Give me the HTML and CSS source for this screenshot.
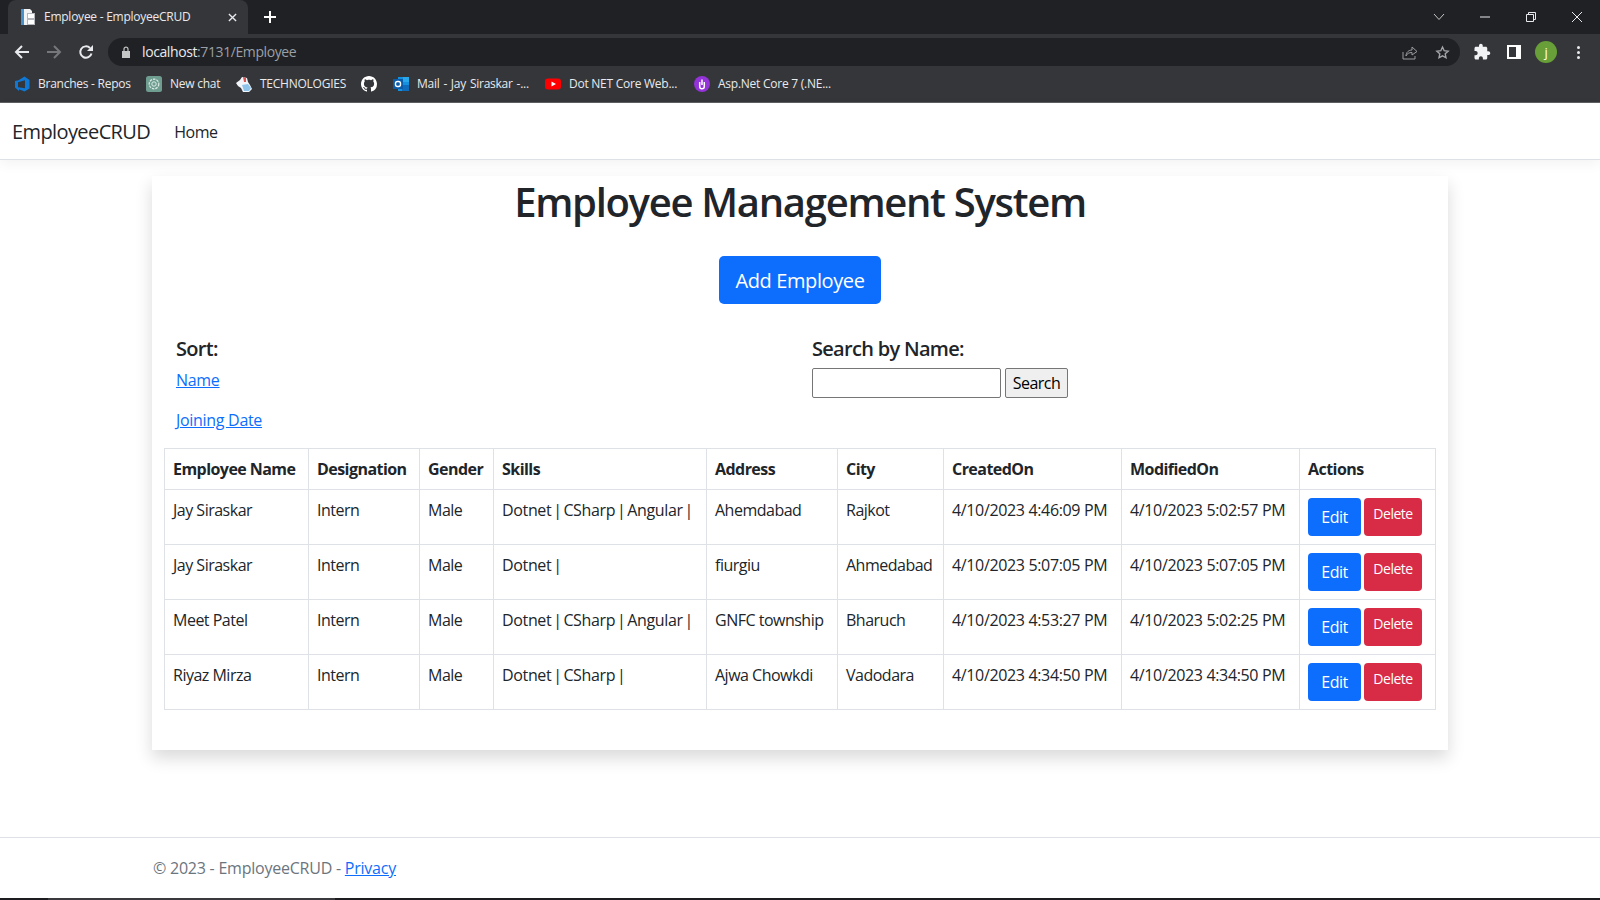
FILE: index.html
```html
<!DOCTYPE html>
<html>
  <head>
    <title>Employee - EmployeeCRUD</title>
    <link rel="stylesheet" href="styles.css">
  </head>
  <body>
    <div class="tabstrip">
      <div class="tab">
        <svg class="fav" viewBox="0 0 16 16"><path fill="#f1f3f4" d="M1 0h9l2 2v14H1z"/><path fill="#4a90c8" d="M1 0h3v16H1z"/><path fill="#b4b8bc" d="M7 4h8v12H7z"/><path fill="#fff" d="M8 5h6v4H8zM8 11h6v4H8z"/></svg>
        <span class="tab-title">Employee - EmployeeCRUD</span>
        <svg class="tab-close" viewBox="0 0 10 10"><path d="M1 1l8 8M9 1l-8 8" stroke="#e8eaed" stroke-width="1.500"/></svg>
      </div>
      <svg class="new-tab" viewBox="0 0 12 12"><path d="M6 0v12M0 6h12" stroke="#fff" stroke-width="2"/></svg>
      <div class="strip-space"></div>
      <div class="chevron"><svg viewBox="0 0 12 8" width="12" height="8"><path d="M1 1l5 5.500L11 1" fill="none" stroke="#c4c7c5" stroke-width="1"/></svg></div>
      <div class="win-btn"><svg viewBox="0 0 10 10" width="10" height="10"><path d="M0 5h10" stroke="#e8eaed" stroke-width="1"/></svg></div>
      <div class="win-btn"><svg viewBox="0 0 10 10" width="10" height="10"><path d="M.5 2.500h7v7h-7zM2.500 2.500v-2h7v7h-2" fill="none" stroke="#e8eaed" stroke-width="1"/></svg></div>
      <div class="win-btn"><svg viewBox="0 0 10 10" width="10" height="10"><path d="M0 0l10 10M10 0L0 10" stroke="#e8eaed" stroke-width="1"/></svg></div>
    </div>

    <div class="toolbar">
      <div class="tool"><svg viewBox="0 0 16 16" width="16" height="16"><path d="M15 8H2M8 2L2 8l6 6" fill="none" stroke="#e8eaed" stroke-width="2"/></svg></div>
      <div class="tool"><svg viewBox="0 0 16 16" width="16" height="16"><path d="M1 8h13M8 2l6 6-6 6" fill="none" stroke="#75777a" stroke-width="2"/></svg></div>
      <div class="tool"><svg viewBox="0 0 16 16" width="16" height="16"><path d="M13.500 9.500A5.700 5.700 0 1 1 12 4" fill="none" stroke="#e8eaed" stroke-width="2"/><path d="M15 1v6H9z" fill="#e8eaed"/></svg></div>
      <div class="omnibox">
        <svg class="lock" viewBox="0 0 10 12" width="10" height="12"><path fill="#c4c7c5" d="M1 5h8v7H1z"/><path d="M3 5V3.200a2 2 0 0 1 4 0V5" fill="none" stroke="#c4c7c5" stroke-width="1.200"/></svg>
        <span class="url"><span class="host">localhost</span>:7131/Employee</span>
        <div class="omni-space"></div>
        <div class="tool"><svg viewBox="0 0 16 16" width="16" height="16"><path d="M1 8v7h12v-3" fill="none" stroke="#9a9c9f" stroke-width="1"/><path d="M4 12c0-4 3-6 6-6V3l5 4.500L10 11V8.500c-3 0-5 1-6 3.500z" fill="none" stroke="#9a9c9f" stroke-width="1"/></svg></div>
        <div class="tool"><svg viewBox="0 0 16 16" width="15" height="15"><path d="M8 2.200l1.800 3.900 4.200.500-3.100 2.800.8 4.200L8 11.500l-3.700 2.100.8-4.200L2 6.600l4.200-.500z" fill="none" stroke="#a4a6a9" stroke-width="1.500"/></svg></div>
      </div>
      <div class="toolbar-right">
        <div class="tool"><svg viewBox="0 0 24 24" width="18" height="18"><path fill="#f1f3f4" d="M20.500 11H19V7c0-1.100-.900-2-2-2h-4V3.500C13 2.120 11.880 1 10.500 1S8 2.120 8 3.500V5H4c-1.100 0-1.990.900-1.990 2v3.800H3.500c1.490 0 2.700 1.210 2.700 2.700s-1.210 2.700-2.700 2.700H2V20c0 1.100.900 2 2 2h3.800v-1.500c0-1.490 1.210-2.700 2.700-2.700 1.490 0 2.700 1.210 2.700 2.700V22H17c1.100 0 2-.900 2-2v-4h1.500c1.380 0 2.500-1.120 2.500-2.500S21.880 11 20.500 11z"/></svg></div>
        <div class="tool"><svg viewBox="0 0 14 14" width="14" height="14"><path fill="#fff" d="M0 0h14v14H0z"/><path fill="#35363a" d="M2 2h7v10H2z"/></svg></div>
        <div class="tool"><span class="avatar">j</span></div>
        <div class="tool"><span class="dots"><i></i><i></i><i></i></span></div>
      </div>
    </div>

    <div class="bookmarks">
      <a class="bm bm-repos"><svg viewBox="0 0 16 16" width="16" height="16"><path fill="#0f78d4" fill-rule="evenodd" d="M10.500 .5l5 3.500v8.500l-5 3-5.500-2.300V15L1 11.500V5l3.500-.700zM4 6.200v5l7 1V4.200z"/></svg>Branches - Repos</a>
      <a class="bm bm-chat"><svg viewBox="0 0 16 16" width="16" height="16"><rect width="16" height="16" rx="2.500" fill="#6f9e91"/><circle cx="8" cy="8" r="4.800" fill="none" stroke="#dcebe6" stroke-width="1.200" stroke-dasharray="2.500 1"/><circle cx="8" cy="8" r="2.200" fill="none" stroke="#dcebe6" stroke-width="1"/></svg>New chat</a>
      <a class="bm bm-tech"><svg viewBox="0 0 16 16" width="16" height="16"><path fill="#f1f5f9" d="M0 7l4-3 2-3 5 1 1 4 2 3 2 4-3 3H7L5 12 2 10z"/><path fill="#8fc4ea" d="M6 9l6-1 3 4-2 3H8z"/><path fill="#d9534f" d="M7 1l3 1v4H8z"/></svg>TECHNOLOGIES</a>
      <a class="bm bm-git"><svg viewBox="0 0 16 16" width="16" height="16"><path fill="#fff" d="M8 0C3.580 0 0 3.580 0 8c0 3.540 2.290 6.530 5.470 7.590.4.070.55-.170.55-.380 0-.190-.010-.820-.010-1.490-2.010.370-2.530-.490-2.690-.940-.090-.230-.480-.940-.820-1.130-.280-.150-.680-.520-.010-.530.630-.010 1.080.580 1.230.820.720 1.210 1.870.870 2.330.660.070-.520.280-.870.510-1.070-1.780-.200-3.640-.890-3.640-3.950 0-.870.310-1.590.820-2.150-.080-.200-.360-1.020.080-2.120 0 0 .670-.210 2.200.820.640-.180 1.320-.270 2-.270s1.360.090 2 .270c1.530-1.040 2.200-.820 2.200-.820.440 1.100.160 1.920.080 2.120.510.560.820 1.270.820 2.150 0 3.070-1.870 3.750-3.650 3.950.290.250.540.730.540 1.480 0 1.070-.010 1.930-.010 2.200 0 .210.150.460.550.380A8.010 8.010 0 0 0 16 8c0-4.420-3.580-8-8-8z"/></svg></a>
      <a class="bm bm-mail"><svg viewBox="0 0 16 16" width="16" height="16"><path fill="#1490df" d="M5 1h11v14H5z"/><path fill="#28a8ea" d="M10 1h6v5h-6z"/><path fill="#0f6cbd" d="M9 9h7v6H9z"/><rect y="3" width="10" height="10" fill="#0a5ca8"/><rect x="2.500" y="5.500" width="5" height="5" rx="2" fill="none" stroke="#fff" stroke-width="1.400"/></svg>Mail - Jay Siraskar -...</a>
      <a class="bm bm-yt"><svg viewBox="0 0 16 16" width="16" height="16"><rect y="2.500" width="16" height="11" rx="3" fill="#f00"/><path fill="#fff" d="M6.500 5.500L11 8l-4.500 2.500z"/></svg>Dot NET Core Web...</a>
      <a class="bm"><svg viewBox="0 0 16 16" width="16" height="16"><circle cx="8" cy="8" r="8" fill="#9333d8"/><path d="M5.700 6v4.500a2.300 2.300 0 0 0 4.600 0V6" fill="none" stroke="#fff" stroke-width="1.500"/><path d="M8 3.500V9" stroke="#fff" stroke-width="1.500"/></svg>Asp.Net Core 7 (.NE...</a>
    </div>

    <div class="page">
      <nav class="navbar">
        <a class="brand">EmployeeCRUD</a>
        <a class="nav-link">Home</a>
      </nav>

      <main class="card">
        <h1 class="title">Employee Management System</h1>
        <div class="add-row"><a class="btn btn-lg">Add Employee</a></div>

        <div class="filters">
          <div class="sort">
            <h5 class="filter-head">Sort:</h5>
            <p class="sort-link"><a href="#">Name</a></p>
            <p class="sort-link"><a href="#">Joining Date</a></p>
          </div>
          <div class="search">
            <h5 class="filter-head">Search by Name:</h5>
            <form class="search-form">
              <input type="text" class="search-input">
              <input type="button" class="search-btn" value="Search">
            </form>
          </div>
        </div>

        <table class="emp-table">
          <colgroup>
            <col class="c-name"><col class="c-desig"><col class="c-gender"><col class="c-skills"><col class="c-addr"><col class="c-city"><col class="c-date"><col class="c-date"><col class="c-act">
          </colgroup>
          <tr>
            <th>Employee Name</th><th>Designation</th><th>Gender</th><th>Skills</th><th>Address</th><th>City</th><th>CreatedOn</th><th>ModifiedOn</th><th>Actions</th>
          </tr>
          <tr>
            <td>Jay Siraskar</td><td>Intern</td><td>Male</td><td class="skills">Dotnet | CSharp | Angular |</td><td>Ahemdabad</td><td>Rajkot</td><td class="date">4/10/2023 4:46:09 PM</td><td class="date">4/10/2023 5:02:57 PM</td>
            <td><div class="actions"><a class="btn btn-edit">Edit</a><a class="btn btn-del">Delete</a></div></td>
          </tr>
          <tr>
            <td>Jay Siraskar</td><td>Intern</td><td>Male</td><td class="skills">Dotnet |</td><td>fiurgiu</td><td>Ahmedabad</td><td class="date">4/10/2023 5:07:05 PM</td><td class="date">4/10/2023 5:07:05 PM</td>
            <td><div class="actions"><a class="btn btn-edit">Edit</a><a class="btn btn-del">Delete</a></div></td>
          </tr>
          <tr>
            <td>Meet Patel</td><td>Intern</td><td>Male</td><td class="skills">Dotnet | CSharp | Angular |</td><td>GNFC township</td><td>Bharuch</td><td class="date">4/10/2023 4:53:27 PM</td><td class="date">4/10/2023 5:02:25 PM</td>
            <td><div class="actions"><a class="btn btn-edit">Edit</a><a class="btn btn-del">Delete</a></div></td>
          </tr>
          <tr>
            <td>Riyaz Mirza</td><td>Intern</td><td>Male</td><td class="skills">Dotnet | CSharp |</td><td>Ajwa Chowkdi</td><td>Vadodara</td><td class="date">4/10/2023 4:34:50 PM</td><td class="date">4/10/2023 4:34:50 PM</td>
            <td><div class="actions"><a class="btn btn-edit">Edit</a><a class="btn btn-del">Delete</a></div></td>
          </tr>
        </table>
      </main>

      <footer class="footer">
        <div class="footer-in">© 2023 - EmployeeCRUD - <a href="#">Privacy</a></div>
      </footer>
    </div>
    <div class="taskbar"></div>
  </body>
</html>
```

FILE: styles.css
```css
* {
  box-sizing: border-box;
}
html, body {
  height: 900px;
  overflow: hidden;
}
body {
  margin: 0;
  display: flex;
  flex-direction: column;
  font-family: "Open Sans", "Noto Sans", sans-serif;
  font-size: 16px;
  line-height: 24px;
  letter-spacing: -0.3px;
  color: #212529;
  background-color: #fff;
}

/* browser chrome */
.tabstrip {
  height: 34px;
  flex: none;
  display: flex;
  align-items: center;
  background-color: #202124;
}
.tab {
  width: 240px;
  height: 34px;
  margin-left: 8px;
  padding: 0 11px 0 12px;
  display: flex;
  align-items: center;
  background-color: #35363a;
  border-radius: 8px 8px 0 0;
}
.fav {
  width: 16px;
  height: 16px;
  margin-right: 8px;
}
.tab-title {
  flex: 1;
  color: #e8eaed;
  font-size: 12px;
  letter-spacing: -0.25px;
  white-space: nowrap;
}
.tab-close {
  width: 9px;
  height: 9px;
}
.new-tab {
  width: 12px;
  height: 12px;
  margin-left: 16px;
}
.strip-space {
  flex: 1;
}
.chevron {
  width: 32px;
  margin-right: 7px;
  display: flex;
  justify-content: center;
}
.win-btn {
  width: 46px;
  display: flex;
  justify-content: center;
}
.toolbar {
  height: 35px;
  flex: none;
  padding: 4px 6px 3px 6px;
  display: flex;
  align-items: center;
  background-color: #35363a;
}
.tool {
  width: 32px;
  height: 28px;
  flex: none;
  display: flex;
  align-items: center;
  justify-content: center;
}
.omnibox {
  flex: 1;
  height: 28px;
  margin-left: 6px;
  padding: 0 2px 0 13px;
  display: flex;
  align-items: center;
  background-color: #202124;
  border-radius: 14px;
}
.url {
  margin-left: 11px;
  color: #9aa0a6;
  font-size: 14px;
  letter-spacing: -0.4px;
}
.host {
  color: #e8eaed;
}
.omni-space {
  flex: 1;
}
.toolbar-right {
  margin-left: 6px;
  display: flex;
}
.avatar {
  width: 22px;
  height: 22px;
  border-radius: 50%;
  background-color: #689f38;
  color: #fff;
  font-size: 13px;
  line-height: 22px;
  text-align: center;
}
.dots {
  display: flex;
  flex-direction: column;
  gap: 2px;
}
.dots i {
  width: 3px;
  height: 3px;
  border-radius: 50%;
  background-color: #e8eaed;
}
.bookmarks {
  height: 34px;
  flex: none;
  padding: 0 0 4px 14px;
  display: flex;
  align-items: center;
  background-color: #35363a;
  border-bottom: 1px solid #5f6063;
}
.bm {
  display: flex;
  align-items: center;
  gap: 8px;
  color: #e8eaed;
  font-size: 12px;
  letter-spacing: -0.25px;
  white-space: nowrap;
}
.bm-repos { width: 132px; }
.bm-chat { width: 90px; }
.bm-tech { width: 125px; }
.bm-git { width: 32px; }
.bm-mail { width: 152px; word-spacing: 1px; }
.bm-yt { width: 149px; }

/* page */
.page {
  flex: 1;
  display: flex;
  flex-direction: column;
}
.navbar {
  height: 57px;
  flex: none;
  padding: 2px 12px 0;
  display: flex;
  align-items: center;
  background-color: #fff;
  border-bottom: 1px solid #dee2e6;
  box-shadow: 0 4px 12px rgba(0, 0, 0, .05);
}
.brand {
  font-size: 20px;
  letter-spacing: -0.6px;
  margin-right: 24px;
}
.nav-link {
  color: #212529;
  letter-spacing: -0.5px;
}
.card {
  width: 1296px;
  height: 574px;
  margin: 16px auto 0;
  padding: 0 12px;
  background-color: #fff;
  box-shadow: 0 8px 16px rgba(0, 0, 0, .15);
}
.title {
  margin: 2px 0 30px;
  font-size: 40px;
  font-weight: 600;
  letter-spacing: -1.3px;
  line-height: 48px;
  text-align: center;
}
.add-row {
  text-align: center;
}
.btn {
  display: inline-block;
  color: #fff;
  background-color: #0d6efd;
  border-radius: 4px;
  text-align: center;
}
.btn-lg {
  padding: 10px 16px 8px;
  width: 162px;
  font-size: 20px;
  letter-spacing: -0.4px;
  line-height: 30px;
  border-radius: 5px;
}
.filters {
  margin-top: 33px;
  display: flex;
}
.sort {
  width: 648px;
  padding-left: 12px;
}
.filter-head {
  margin: 0 0 7px;
  font-size: 20px;
  font-weight: 600;
  letter-spacing: -0.7px;
  line-height: 24px;
}
.sort-link {
  margin: 0 0 16px;
}
a[href] {
  color: #0d6efd;
}
.search-form {
  margin: 0;
  display: flex;
  gap: 4px;
}
.search-input {
  width: 189px;
  height: 30px;
  border: 1px solid #767676;
  border-radius: 2px;
}
.search-btn {
  width: 63px;
  height: 30px;
  padding: 0;
  font-family: inherit;
  font-size: 16px;
  letter-spacing: -0.5px;
  color: #000;
  background-color: #efefef;
  border: 1px solid #767676;
  border-radius: 2px;
}
.emp-table {
  width: 1271px;
  table-layout: fixed;
  border-collapse: collapse;
}
.c-name { width: 144px; }
.c-desig { width: 111px; }
.c-gender { width: 74px; }
.c-skills { width: 213px; }
.c-addr { width: 131px; }
.c-city { width: 106px; }
.c-date { width: 178px; }
.c-act { width: 136px; }
th, td {
  padding: 8px;
  border: 1px solid #dee2e6;
  text-align: left;
  vertical-align: top;
  white-space: nowrap;
  letter-spacing: -0.5px;
}
th {
  font-weight: 700;
  letter-spacing: -0.55px;
}
td.date {
  letter-spacing: -0.35px;
}
td.skills {
  letter-spacing: -0.35px;
  word-spacing: -2px;
}
.actions {
  display: flex;
  gap: 3px;
}
.btn-edit {
  width: 53px;
  height: 38px;
  line-height: 38px;
}
.btn-del {
  width: 58px;
  height: 38px;
  font-size: 14px;
  line-height: 32px;
  background-color: #d82c46;
}
.footer {
  height: 61px;
  margin-top: auto;
  border-top: 1px solid #dee2e6;
  color: #6c757d;
  letter-spacing: -0.23px;
  line-height: 61px;
}
.footer-in {
  width: 1296px;
  margin: 0 auto;
  padding-left: 1px;
}
.taskbar {
  height: 2px;
  flex: none;
  background: linear-gradient(90deg, #1d1d1f 48px, #3a3a3c 48px, #3a3a3c 335px, #1d1d1f 335px);
}
```
